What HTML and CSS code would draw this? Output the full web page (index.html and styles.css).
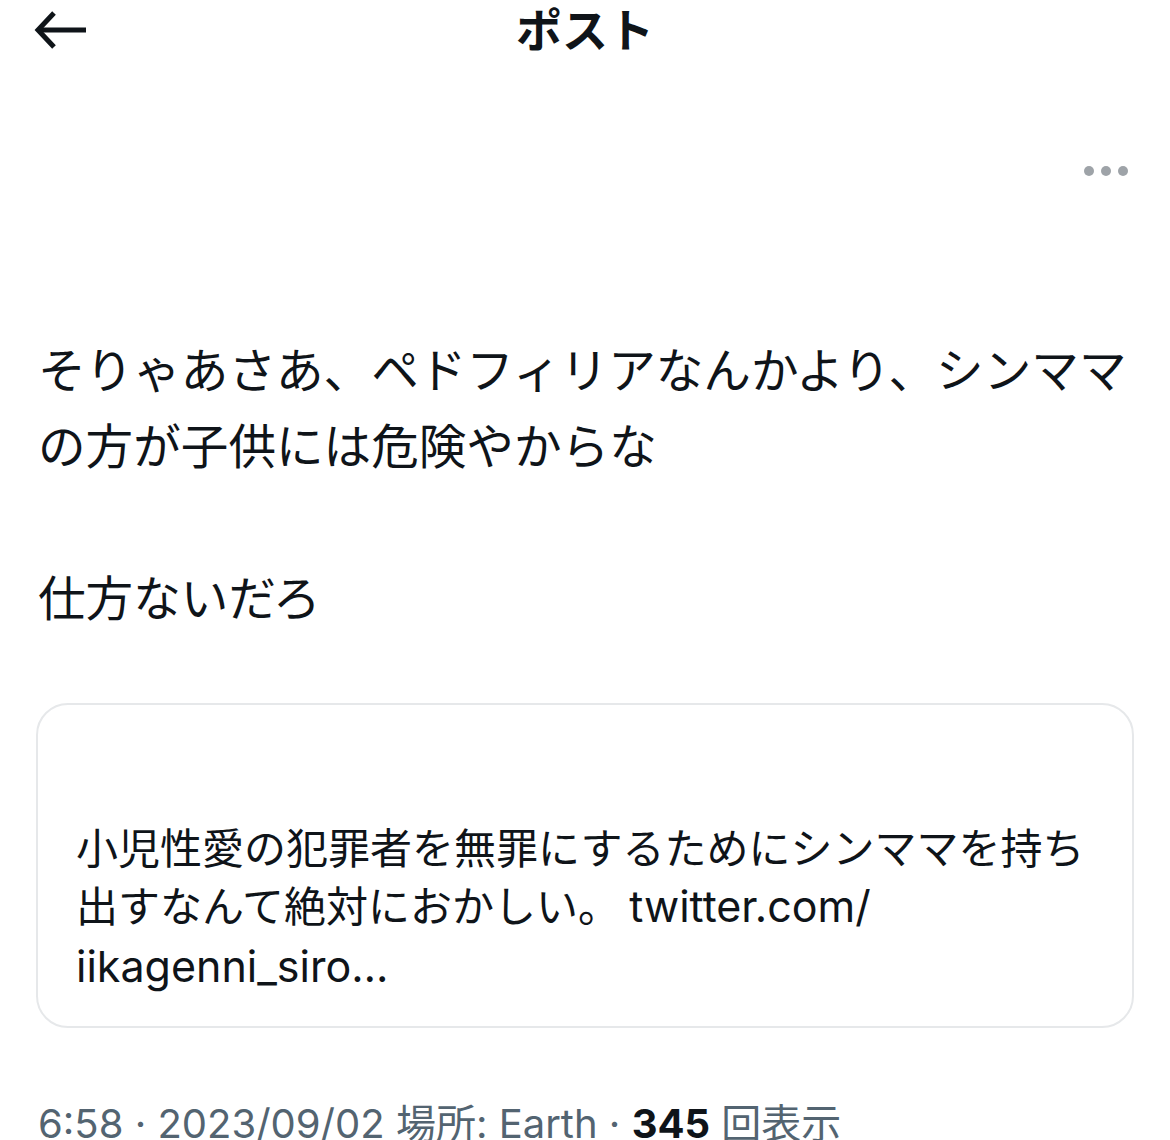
FILE: index.html
```html
<!DOCTYPE html>
<html lang="ja">
<head>
    <meta charset="UTF-8">
    <meta name="viewport" content="width=device-width, initial-scale=1.0">
    <title>ポスト</title>
    <link rel="stylesheet" href="styles.css">
</head>
<body>
    <div class="topbar">
        <div class="back">
            <svg width="54" height="40" viewBox="0 0 54 40" fill="none" stroke="#0f1419" stroke-width="5" stroke-linecap="butt">
                <path d="M4 20 H52"/>
                <path d="M20 3 L4 20 L20 37"/>
            </svg>
        </div>
        <div class="title">ポスト</div>
        <div></div>
    </div>

    <div class="author">
        <div class="more">
            <span></span><span></span><span></span>
        </div>
    </div>

    <div class="post-text">
        そりゃあさあ、ペドフィリアなんかより、シンママ<br>
        の方が子供には危険やからな<br>
        <br>
        仕方ないだろ
    </div>

    <div class="quote">
        <div class="quote-head"></div>
        <div class="quote-text">
            小児性愛の犯罪者を無罪にするためにシンママを持ち<br>
            出すなんて絶対におかしい。 <span class="latin">twitter.com/</span><br>
            <span class="latin">iikagenni_siro…</span>
        </div>
    </div>

    <div class="meta">
        <span>6:58 · 2023/09/02 場所: Earth · </span><b>345</b> <span>回表示</span>
    </div>
</body>
</html>
```

FILE: styles.css
```css
body {
    margin: 0;
    background-color: #ffffff;
    color: #0f1419;
    font-family: "Inter", "Noto Sans CJK JP", sans-serif;
}
.topbar {
    height: 60px;
    display: grid;
    grid-template-columns: 1fr auto 1fr;
    align-items: center;
    padding: 0 34px;
}
.back svg {
    display: block;
}
.title {
    font-family: "Noto Sans CJK JP", sans-serif;
    font-weight: bold;
    font-size: 46px;
    line-height: 64px;
    margin-top: -6px;
}
.author {
    height: 270px;
    display: flex;
    justify-content: flex-end;
    padding: 0 42px 0 0;
}
.more {
    display: flex;
    gap: 7px;
    margin-top: 106px;
    height: 10px;
}
.more span {
    width: 10px;
    height: 10px;
    border-radius: 50%;
    background-color: #9ea3a8;
}
.post-text {
    margin: 0 0 0 38px;
    font-family: "Noto Sans CJK JP", sans-serif;
    font-size: 47.6px;
    line-height: 76px;
    white-space: nowrap;
}
.quote {
    margin: 69px 36px 0 36px;
    border: 2px solid #e6e8ea;
    border-radius: 32px;
    height: 325px;
    box-sizing: border-box;
    padding: 0 38px;
}
.quote-head {
    height: 112px;
}
.quote-text {
    font-family: "Noto Sans CJK JP", sans-serif;
    font-size: 42px;
    line-height: 58px;
    white-space: nowrap;
}
.quote-text .latin {
    font-family: "Inter", sans-serif;
    font-size: 43px;
}
.meta {
    margin: 72px 0 0 38px;
    font-size: 40px;
    line-height: 48px;
    color: #536471;
    white-space: nowrap;
}
.meta b {
    color: #0f1419;
}
```
